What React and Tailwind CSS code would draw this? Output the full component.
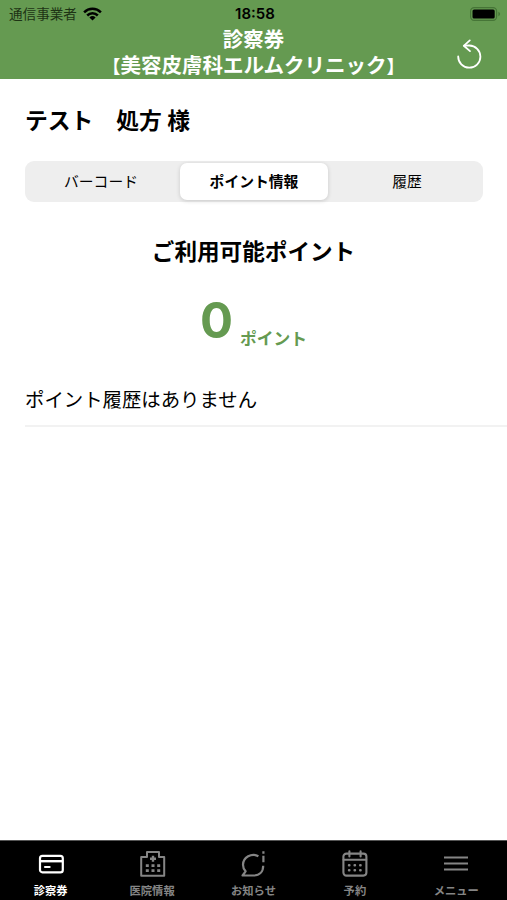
const points = 0;

function Wifi() {
  return (
    <svg className="h-[14px] w-[19px]" viewBox="0 0 19 14" fill="none" stroke="#000" strokeWidth="2.5">
      <path d="M1.1 5.3a12 12 0 0 1 16.8 0" />
      <path d="M4.2 8.5a7.5 7.5 0 0 1 10.6 0" />
      <path d="M9.5 13.6 6.4 10.4a4.5 4.5 0 0 1 6.2 0Z" fill="#000" stroke="none" />
    </svg>
  );
}

function Battery() {
  return (
    <svg className="h-[14px] w-[31px]" viewBox="0 0 31 14">
      <rect x=".6" y=".6" width="26" height="12.8" rx="3.6" fill="none" stroke="#467537" strokeWidth="1.2" />
      <rect x="2.5" y="2.5" width="22.2" height="9" rx="1.6" />
      <path d="M28.4 4.8c2.2.8 2.2 3.6 0 4.4z" fill="#467537" />
    </svg>
  );
}

function Refresh() {
  return (
    <svg className="h-[30px] w-[26px]" viewBox="0 0 26 30" fill="none" stroke="#fff" strokeWidth="1.8" strokeLinecap="round" strokeLinejoin="round">
      <path d="M2.2 17.4A11.1 11.1 0 1 0 13.3 6.5c-2 0-3.6 0-5.2.2" />
      <path d="M13.8 1.4 7.8 6.8l6.2 5.3" />
    </svg>
  );
}

function CardIcon() {
  return (
    <svg className="size-7" viewBox="0 0 28 28" fill="none" stroke="currentColor" strokeWidth="2.2">
      <rect x="3" y="5.9" width="22.8" height="16.4" rx="2.4" />
      <path d="M3 11.2h22.8" strokeWidth="2.4" />
      <path d="M8 17h4.6" strokeLinecap="round" />
    </svg>
  );
}

function HospitalIcon() {
  return (
    <svg className="size-7" viewBox="0 0 28 28" fill="none" stroke="currentColor" strokeWidth="2">
      <path d="M9 7V2h12v5h5.2v18.8H3.2V7Z" strokeLinejoin="round" />
      <path d="M15 5.8v6M12 8.8h6" strokeWidth="2.4" />
      <path d="M7.8 15.6h3m2.7 0h3m2.7 0h3M7.8 20.6h3m2.7 0h3m2.7 0h3" strokeWidth="2.6" />
    </svg>
  );
}

function NoticeIcon() {
  return (
    <svg className="size-7" viewBox="0 0 28 28" fill="none" stroke="currentColor" strokeWidth="2.2">
      <path d="M19.4 6.2C12.6 2.4 4 7.4 4 14.8c0 2.4.8 4.7 2.6 6.5l-3 4.2h11.2c5.8 0 9.4-3.8 9.4-9.8" strokeLinejoin="round" />
      <path d="M24.4 5.8v6.4M24.4 1.3v2.4" />
    </svg>
  );
}

function CalendarIcon() {
  return (
    <svg className="size-7" viewBox="0 0 28 28" fill="none" stroke="currentColor" strokeWidth="2.1" strokeLinecap="round">
      <rect x="2.4" y="3.6" width="23" height="22" rx="3" />
      <path d="M8.4 1.4v5M19.6 1.4v5M2.6 9.8h22.6" />
      <path d="M8 15.2h.4m5.2 0h.4m5.2 0h.4M8 20.2h.4m5.2 0h.4m5.2 0h.4" strokeWidth="2.4" />
    </svg>
  );
}

function MenuIcon() {
  return (
    <svg className="size-7" viewBox="0 0 28 28" stroke="currentColor" strokeWidth="2.2">
      <path d="M2 7.5h24M2 13.5h24M2 19.5h24" />
    </svg>
  );
}

const navItems = [
  { label: "診察券", Icon: CardIcon, active: true },
  { label: "医院情報", Icon: HospitalIcon },
  { label: "お知らせ", Icon: NoticeIcon },
  { label: "予約", Icon: CalendarIcon },
  { label: "メニュー", Icon: MenuIcon },
];

export default function App() {
  return (
    <div className="flex h-[900px] w-[507px] flex-col overflow-hidden bg-white font-['Inter','Noto_Sans_CJK_JP',sans-serif] text-black">
      <header className="h-[79px] shrink-0 bg-[#659a51]">
        <div className="grid h-[27px] grid-cols-3 items-center pr-[6px] pl-[9px]">
          <div className="flex items-center gap-1.5 pt-px text-[13.6px] text-[#1d3314]">
            <span>通信事業者</span>
            <Wifi />
          </div>
          <time className="pt-0.5 text-center text-[15px] font-semibold">18:58</time>
          <div className="flex justify-end">
            <Battery />
          </div>
        </div>
        <div className="grid h-[51px] grid-cols-[60px_1fr_60px] items-center">
          <h1 className="col-start-2 text-center text-[20.5px] leading-[26px] font-bold whitespace-nowrap text-white">
            診察券
            <br />
            <span className="text-[18px]">【</span>美容皮膚科エルムクリニック<span className="text-[18px]">】</span>
          </h1>
          <button className="ml-[9px]" aria-label="更新">
            <Refresh />
          </button>
        </div>
      </header>

      <main className="flex-1">
        <h2 className="mt-[26px] ml-[25px] text-[22.8px] leading-8 font-bold whitespace-pre">テスト　処方 様</h2>
        <div className="mt-6 mr-[24px] ml-[25px] grid h-[41px] grid-cols-[154px_150px_154px] items-center rounded-[9px] bg-[#eee] text-center text-[14.8px]">
          <button className="pt-0.5 pr-0.5">バーコード</button>
          <button className="mx-px h-[37px] rounded-[7px] bg-white pt-0.5 font-bold shadow-[0_1px_4px_rgba(0,0,0,0.16)]">ポイント情報</button>
          <button className="pt-0.5 pl-0.5">履歴</button>
        </div>
        <h3 className="mt-[34px] text-center text-[22.6px] leading-8 font-bold">ご利用可能ポイント</h3>
        <p className="mt-[23px] flex h-[60px] items-baseline justify-center gap-[7px] font-bold text-[#659a51]">
          <span className="text-[49px] leading-[60px]">{points}</span>
          <span className="relative top-[7px] text-[16.8px]">ポイント</span>
        </p>
        <p className="mt-[33px] ml-[25px] border-b-2 border-[#f2f2f2] pb-[9px] text-[19.4px] leading-8">ポイント履歴はありません</p>
      </main>

      <nav className="grid h-[60px] shrink-0 grid-cols-5 border-t border-[#555] bg-black">
        {navItems.map(({ label, Icon, active }) => (
          <a key={label} className={`flex flex-col items-center pt-[9px] font-bold ${active ? "text-white" : "text-[#858585]"}`}>
            <Icon />
            <span className="mt-[5px] text-[11.3px] leading-4">{label}</span>
          </a>
        ))}
      </nav>
    </div>
  );
}
